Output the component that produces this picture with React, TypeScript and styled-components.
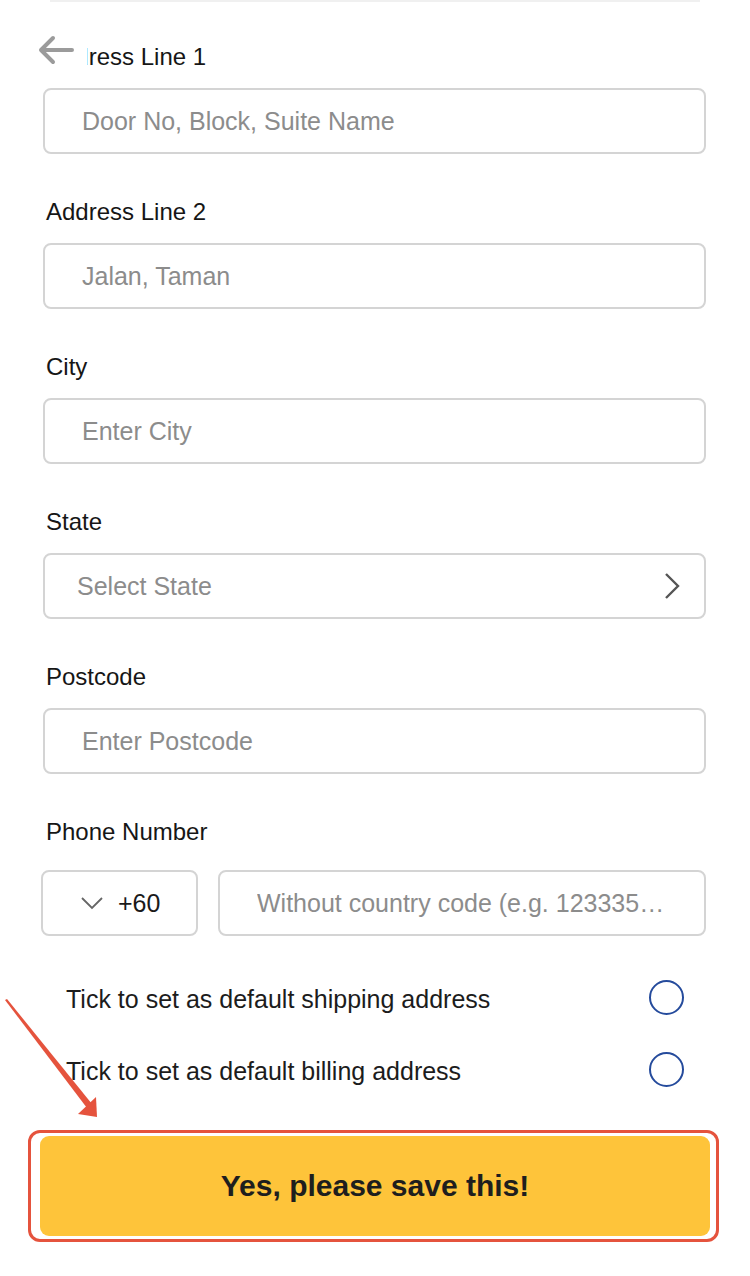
import React from "react";
import styled, { createGlobalStyle } from "styled-components";

const GlobalStyle = createGlobalStyle`
  html, body {
    margin: 0;
    padding: 0;
    background: #ffffff;
  }
  body {
    font-family: "Liberation Sans", Arial, Helvetica, sans-serif;
    color: #1a1a1a;
  }
`;

const Page = styled.div`
  position: relative;
  width: 750px;
  min-height: 1276px;
  background: #ffffff;
  overflow: hidden;
`;

const TopRule = styled.div`
  height: 2px;
  margin: 0 50px;
  background: #f0f0f0;
`;

const BackButton = styled.button`
  position: absolute;
  top: 30px;
  left: 30px;
  width: 57px;
  height: 40px;
  padding: 0 0 0 7px;
  border: none;
  background: #ffffff;
  display: flex;
  align-items: center;
  cursor: pointer;
`;

const Form = styled.form`
  display: flex;
  flex-direction: column;
  padding: 41px 44px 0 43px;
`;

const FieldGroup = styled.div<{ $gap?: number; $after?: number }>`
  display: flex;
  flex-direction: column;
  gap: ${(p) => p.$gap ?? 17}px;
  margin-bottom: ${(p) => p.$after ?? 44}px;
`;

const Label = styled.label`
  padding-left: 3px;
  font-size: 24px;
  line-height: 28px;
  color: #161616;
`;

// input-like box; $width fixes it, $grow lets it take the free row space
const Box = styled.div<{ $width?: number; $grow?: boolean; $pad?: number }>`
  box-sizing: border-box;
  flex: ${(p) => (p.$grow ? "1 1 0" : "none")};
  height: 66px;
  ${(p) => (p.$width ? `width: ${p.$width}px;` : "")}
  display: flex;
  align-items: center;
  padding: 0 22px 0 ${(p) => p.$pad ?? 37}px;
  border: 2.5px solid #d4d4d4;
  border-radius: 8px;
  background: #ffffff;
  min-width: 0;
`;

const Placeholder = styled.span`
  flex: 1;
  font-size: 25px;
  color: #8c8c8c;
  white-space: nowrap;
  overflow: hidden;
`;

const PhoneRow = styled.div`
  display: flex;
  gap: 20px;
  margin-left: -2px;
`;

const CountryCode = styled.span`
  font-size: 25px;
  color: #1a1a1a;
  margin-left: 14px;
`;

const OptionList = styled.div`
  display: flex;
  flex-direction: column;
`;

const OptionRow = styled.div`
  height: 72px;
  display: flex;
  align-items: center;
  justify-content: space-between;
  padding: 0 22px 0 23px;
`;

const OptionText = styled.span`
  font-size: 25px;
  color: #1c1c1c;
`;

const Radio = styled.span`
  box-sizing: border-box;
  width: 35px;
  height: 35px;
  border-radius: 50%;
  border: 2.5px solid #254b9c;
  margin-top: -3px;
`;

const SaveFrame = styled.div`
  margin: 23px 31px 0 28px;
  padding: 3px 6px 3px 9px;
  border: 3px solid #e5533d;
  border-radius: 12px;
`;

const SaveButton = styled.button`
  width: 100%;
  height: 100px;
  border: none;
  border-radius: 9px;
  background: #fec43a;
  font-family: "Liberation Sans", Arial, sans-serif;
  font-weight: 700;
  font-size: 30px;
  color: #1e1e1e;
  cursor: pointer;
`;

const Pointer = styled.svg`
  position: absolute;
  left: 0;
  top: 990px;
`;

const fields = [
  { label: "Address Line 1", placeholder: "Door No, Block, Suite Name" },
  { label: "Address Line 2", placeholder: "Jalan, Taman" },
  { label: "City", placeholder: "Enter City" },
];

const App: React.FC = () => {
  return (
    <Page>
      <GlobalStyle />
      <TopRule />
      <Form onSubmit={(e) => e.preventDefault()}>
        {fields.map((f) => (
          <FieldGroup key={f.label}>
            <Label>{f.label}</Label>
            <Box>
              <Placeholder>{f.placeholder}</Placeholder>
            </Box>
          </FieldGroup>
        ))}
        <FieldGroup>
          <Label>State</Label>
          <Box $pad={32}>
            <Placeholder>Select State</Placeholder>
            <svg width="20" height="28" viewBox="0 0 20 28">
              <polyline
                points="4,2 16,14 4,26"
                fill="none"
                stroke="#555"
                strokeWidth="2.4"
              />
            </svg>
          </Box>
        </FieldGroup>
        <FieldGroup>
          <Label>Postcode</Label>
          <Box>
            <Placeholder>Enter Postcode</Placeholder>
          </Box>
        </FieldGroup>
        <FieldGroup $gap={24} $after={27}>
          <Label>Phone Number</Label>
          <PhoneRow>
            <Box $width={157} $pad={37}>
              <svg width="24" height="14" viewBox="0 0 24 14">
                <polyline
                  points="2,2 12,12 22,2"
                  fill="none"
                  stroke="#666"
                  strokeWidth="1.8"
                />
              </svg>
              <CountryCode>+60</CountryCode>
            </Box>
            <Box $grow>
              <Placeholder>Without country code (e.g. 123335…</Placeholder>
            </Box>
          </PhoneRow>
        </FieldGroup>
        <OptionList>
          <OptionRow>
            <OptionText>Tick to set as default shipping address</OptionText>
            <Radio />
          </OptionRow>
          <OptionRow>
            <OptionText>Tick to set as default billing address</OptionText>
            <Radio />
          </OptionRow>
        </OptionList>
      </Form>
      <SaveFrame>
        <SaveButton type="button">Yes, please save this!</SaveButton>
      </SaveFrame>
      <BackButton type="button" aria-label="Back">
        <svg width="38" height="30" viewBox="0 0 38 30">
          <path
            d="M35 15 H4 M16 3 L4 15 L16 27"
            fill="none"
            stroke="#9b9b9b"
            strokeWidth="4"
            strokeLinecap="round"
            strokeLinejoin="round"
          />
        </svg>
      </BackButton>
      <Pointer width="110" height="135" viewBox="0 0 110 135">
        <polygon points="5,10 7,9 92,114 87,118" fill="#e5533d" />
        <polygon points="97,127 78,124 96,107" fill="#e5533d" />
      </Pointer>
    </Page>
  );
};

export default App;
